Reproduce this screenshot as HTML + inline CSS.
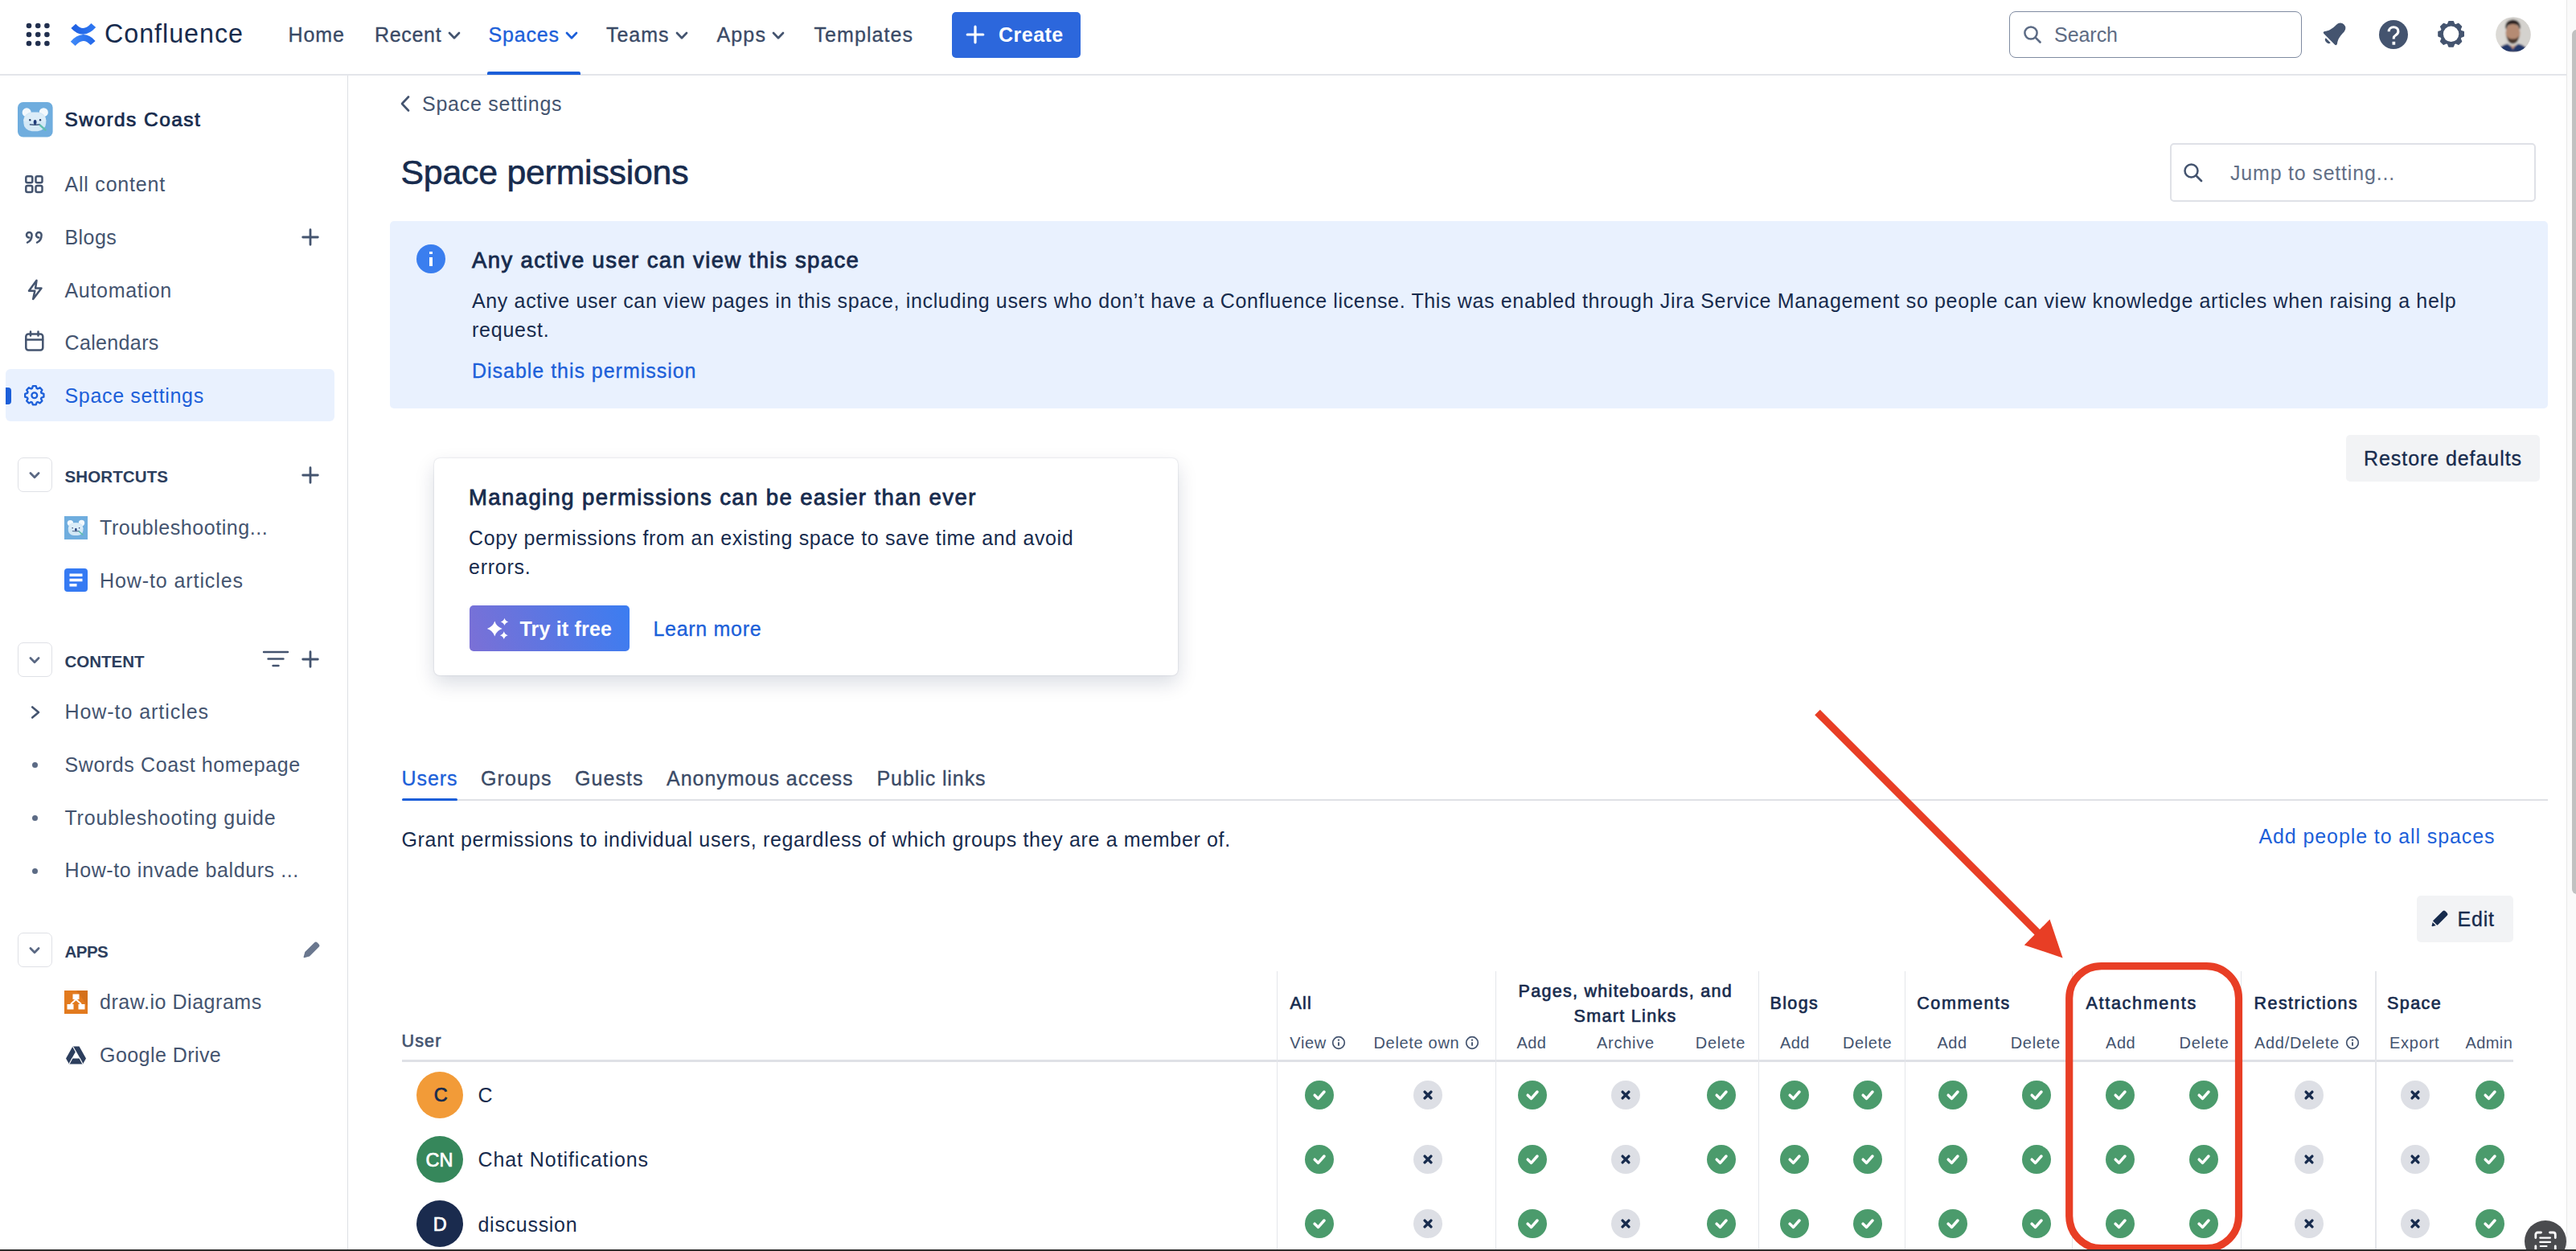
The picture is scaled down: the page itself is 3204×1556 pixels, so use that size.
<!DOCTYPE html>
<html lang="en"><head><meta charset="utf-8"><title>Space permissions - Swords Coast - Confluence</title>
<style>
html,body{margin:0;padding:0;background:#fff;}
html{overflow:hidden;width:3204px;height:1556px;}
body{width:3204px;height:1556px;overflow:hidden;position:relative;font-family:"Liberation Sans", sans-serif;}
.t{position:absolute;white-space:nowrap;line-height:1;}
.a{position:absolute;}
svg{position:absolute;overflow:visible;}

.hl{position:absolute;background:#dfe1e6;}
.chev{fill:none;stroke:#44546f;stroke-width:2.6;stroke-linecap:round;stroke-linejoin:round;}
.ico{fill:none;stroke:#44546f;stroke-width:2.5;stroke-linecap:round;stroke-linejoin:round;}
.box{position:absolute;border:1.5px solid #dfe1e6;border-radius:7px;box-sizing:border-box;background:#fff;}
.ck{position:absolute;width:36px;height:36px;border-radius:50%;background:#4b9b6c;}
.xx{position:absolute;width:36px;height:36px;border-radius:50%;background:#dddfe5;}
.av{position:absolute;width:58px;height:58px;border-radius:50%;}

</style></head><body>
<header role="banner">
<div class="hl" style="left:0;top:92px;width:3192px;height:2px;background:#e3e5ea"></div>
<svg width="100" height="93" style="left:0;top:0" fill="#22304f"><circle cx="36" cy="32" r="3.3"/><circle cx="47.2" cy="32" r="3.3"/><circle cx="58.4" cy="32" r="3.3"/><circle cx="36" cy="43" r="3.3"/><circle cx="47.2" cy="43" r="3.3"/><circle cx="58.4" cy="43" r="3.3"/><circle cx="36" cy="54" r="3.3"/><circle cx="47.2" cy="54" r="3.3"/><circle cx="58.4" cy="54" r="3.3"/></svg>
<svg style="left:0;top:0" width="140" height="93" viewBox="0 0 140 93" fill="none">
<defs><linearGradient id="cg1" gradientUnits="userSpaceOnUse" x1="90" y1="0" x2="118" y2="0"><stop offset="0" stop-color="#1f5fe2"/><stop offset="1" stop-color="#2f78f2"/></linearGradient>
<linearGradient id="cg2" gradientUnits="userSpaceOnUse" x1="90" y1="0" x2="118" y2="0"><stop offset="0" stop-color="#3f88f7"/><stop offset="1" stop-color="#2267ea"/></linearGradient></defs>
<path d="M91.300 32.300Q103.400 45.700 116.300 31.500" stroke="url(#cg1)" stroke-width="7.800"/>
<path d="M115.700 53.500Q103.600 40.100 90.700 54.300" stroke="url(#cg2)" stroke-width="7.800"/></svg>
<span class="t" id="t0" style="left:130.0px;top:26.2px;font-size:32.3px;color:#172b4d;letter-spacing:0.957px;">Confluence</span>
<span class="t" id="t1" style="left:358.5px;top:31.2px;font-size:25px;color:#3a4a66;-webkit-text-stroke-width:0.33px;letter-spacing:0.946px;">Home</span>
<span class="t" id="t2" style="left:466.0px;top:31.2px;font-size:25px;color:#3a4a66;-webkit-text-stroke-width:0.33px;letter-spacing:0.688px;">Recent</span>
<span class="t" id="t3" style="left:607.5px;top:31.2px;font-size:25px;color:#1c5fd9;-webkit-text-stroke-width:0.33px;letter-spacing:0.838px;">Spaces</span>
<span class="t" id="t4" style="left:754.0px;top:31.2px;font-size:25px;color:#3a4a66;-webkit-text-stroke-width:0.33px;letter-spacing:0.969px;">Teams</span>
<span class="t" id="t5" style="left:891.5px;top:31.2px;font-size:25px;color:#3a4a66;-webkit-text-stroke-width:0.33px;letter-spacing:1.147px;">Apps</span>
<span class="t" id="t6" style="left:1012.5px;top:31.2px;font-size:25px;color:#3a4a66;-webkit-text-stroke-width:0.33px;letter-spacing:1.064px;">Templates</span>
<svg style="left:555px;top:33.5px" width="20" height="20"><path d="M4.0 7.0L10 13.2L16.0 7.0" fill="none" stroke="#44546f" stroke-width="2.7" stroke-linecap="round" stroke-linejoin="round"/></svg>
<svg style="left:700.5px;top:33.5px" width="20" height="20"><path d="M4.0 7.0L10 13.2L16.0 7.0" fill="none" stroke="#1c5fd9" stroke-width="2.7" stroke-linecap="round" stroke-linejoin="round"/></svg>
<svg style="left:838.3px;top:33.5px" width="20" height="20"><path d="M4.0 7.0L10 13.2L16.0 7.0" fill="none" stroke="#44546f" stroke-width="2.7" stroke-linecap="round" stroke-linejoin="round"/></svg>
<svg style="left:958.3px;top:33.5px" width="20" height="20"><path d="M4.0 7.0L10 13.2L16.0 7.0" fill="none" stroke="#44546f" stroke-width="2.7" stroke-linecap="round" stroke-linejoin="round"/></svg>
<div class="a" style="left:606px;top:89.200px;width:115.500px;height:4.300px;background:#1c5fd9;border-radius:2px 2px 0 0"></div>
<div class="a" style="left:1183.5px;top:14.5px;width:160px;height:57px;background:#2c67dc;border-radius:5px"></div>
<svg style="left:1202px;top:32px" width="22" height="22"><path d="M11 1.200V20.800M1.200 11H20.800" stroke="#fff" stroke-width="3.2" stroke-linecap="round"/></svg>
<span class="t" id="t7" style="left:1242.0px;top:31.2px;font-size:25px;color:#fff;font-weight:700;letter-spacing:0.486px;">Create</span>
<div class="a" style="left:2498.500px;top:13.900px;width:364.500px;height:58px;border:1.800px solid #7f8ba1;border-radius:8px;box-sizing:border-box"></div>
<svg style="left:2516px;top:31px" width="24" height="24"><circle cx="10" cy="10" r="7.600" fill="none" stroke="#5c6b85" stroke-width="2.5"/><path d="M15.600 15.600L21.500 21.500" stroke="#5c6b85" stroke-width="2.7" stroke-linecap="round"/></svg>
<span class="t" id="t8" style="left:2555.0px;top:31.2px;font-size:25px;color:#5e6c84;letter-spacing:-0.040px;">Search</span>
<svg style="left:0;top:0" width="3204" height="93"><g transform="translate(2904.500 41.400) rotate(45)" fill="#44546f">
<path d="M-6.500 -9A6.500 6.500 0 0 1 6.500 -9C6.500 -1 8 4 11 7.500Q12.300 10.300 9.500 10.300L-9.500 10.300Q-12.300 10.300 -11 7.500C-8 4 -6.500 -1 -6.500 -9Z"/>
<path d="M-4.200 12.400h8.400a4.200 3.300 0 0 1-8.400 0z"/></g></svg>
<div class="a" style="left:2958.6px;top:25px;width:36px;height:36px;border-radius:50%;background:#44546f"></div>
<svg style="left:2958.600px;top:25px" width="36" height="36" viewBox="0 0 36 36"><path d="M12.200 14.300c0-3.300 2.400-5.500 5.900-5.500s5.800 2.100 5.800 5.100c0 2.400-1.400 3.700-3.100 4.800-1.600 1-2.500 1.800-2.500 3.500v1.300" fill="none" stroke="#fff" stroke-width="3.100" stroke-linecap="butt"/><rect x="16.500" y="26.800" width="3.700" height="3.900" fill="#fff"/></svg>
<svg style="left:3028px;top:22px" width="42" height="42"><path d="M32.64 16.58L36.00 17.81L36.00 22.79L32.64 24.02L31.74 26.18L33.25 29.43L29.73 32.95L26.48 31.44L24.32 32.34L23.09 35.70L18.11 35.70L16.88 32.34L14.72 31.44L11.47 32.95L7.95 29.43L9.46 26.18L8.56 24.02L5.20 22.79L5.20 17.81L8.56 16.58L9.46 14.42L7.95 11.17L11.47 7.65L14.72 9.16L16.88 8.26L18.11 4.90L23.09 4.90L24.32 8.26L26.48 9.16L29.73 7.65L33.25 11.17L31.74 14.42Z" fill="#44546f" stroke="#44546f" stroke-width="2" stroke-linejoin="round"/><circle cx="20.600" cy="20.300" r="9.700" fill="#fff"/></svg>
<svg style="left:3104px;top:21px" width="44" height="44" viewBox="0 0 44 44"><defs><filter id="avb"><feGaussianBlur stdDeviation="0.9"/></filter><clipPath id="avc"><circle cx="22" cy="22" r="21.800"/></clipPath></defs>
<g clip-path="url(#avc)"><g filter="url(#avb)"><rect x="-4" y="-4" width="52" height="52" fill="#d4d2ce"/><rect x="0" y="0" width="12" height="44" fill="#dcdad6"/>
<ellipse cx="21.500" cy="20" rx="9" ry="11.500" fill="#b58b73"/><path d="M12 14c0-7 4-10.500 9.500-10.500S31 7 31 14l-1.500 1c-.5-4-3-6-8-6s-7.500 2-8 6z" fill="#2b2320"/>
<path d="M13.500 23c1 7 4 10.500 8 10.500s7-3.500 8-10.500c-1.500 3-4 4.500-8 4.500s-6.500-1.500-8-4.500z" fill="#4a372f"/>
<path d="M3 44c1-7 7-9.500 12-10.500l6.500 5 6.500-5c5 1 11 3.500 12 10.500z" fill="#24386b"/><path d="M18 34.500l3.500 6 3.500-6-3.500 2z" fill="#c79a7f"/></g></g></svg>
</header>
<div class="a" style="left:3192px;top:0;width:12px;height:1556px;background:#fafafa;border-left:1.5px solid #e8e8e8;box-sizing:border-box"></div>
<div class="a" style="left:3198.500px;top:37px;width:12px;height:1075px;background:#c1c1c1;border-radius:6px"></div>
<aside aria-label="Space navigation">
<div class="hl" style="left:431.500px;top:94px;width:1.500px;height:1462px;background:#dddfe4"></div>
<svg style="left:21.800px;top:126.800px" width="43.600" height="43.600" viewBox="0 0 44 44"><rect width="44" height="44" rx="6.800" fill="#6fadde"/><circle cx="11.300" cy="13" r="5.600" fill="#f3f9fd"/><circle cx="32.600" cy="12.800" r="5.600" fill="#f3f9fd"/>
<rect x="7.400" y="12.500" width="28.200" height="24" rx="10.500" fill="#d3e8f6"/><path d="M7.400 24a14.100 11 0 0 1 28.200 0z" fill="#dcedf8"/>
<ellipse cx="21.800" cy="25.300" rx="1.900" ry="3" fill="#1f3a78"/>
<circle cx="15.400" cy="22.500" r="1.200" fill="#27406b"/><circle cx="28.300" cy="22.500" r="1.200" fill="#27406b"/><path d="M15 28.200Q21.800 29 28.200 28.200" stroke="#27406b" stroke-width="1.200" fill="none"/>
<path d="M28 29l6.800 6" stroke="#5fbfae" stroke-width="2.400" stroke-linecap="round"/></svg>
<span class="t" id="t9" style="left:80.5px;top:137.4px;font-size:24.5px;color:#172b4d;-webkit-text-stroke-width:0.73px;letter-spacing:1.433px;">Swords Coast</span>
<svg style="left:30px;top:217px" width="26" height="25" class="ico"><rect x="2.3" y="2.3" width="8" height="8" rx="2"/><rect x="2.3" y="14" width="8" height="8" rx="2"/><rect x="14.5" y="2.3" width="8" height="8" rx="2"/><rect x="14.5" y="14" width="8" height="8" rx="2"/></svg>
<span class="t" id="t10" style="left:80.5px;top:217.4px;font-size:25px;color:#44546f;letter-spacing:0.786px;">All content</span>
<svg style="left:31px;top:287px" width="26" height="19" class="ico" stroke-width="2.300"><path d="M5.3 8.600a3.300 3.300 0 1 1 0-6.600a3.300 3.300 0 0 1 3.300 3.300c0 4.500-1.800 7.700-5.600 9.300" /><path d="M17.3 8.600a3.300 3.300 0 1 1 0-6.600a3.300 3.300 0 0 1 3.300 3.300c0 4.500-1.800 7.700-5.600 9.300" /></svg>
<span class="t" id="t11" style="left:80.5px;top:283.1px;font-size:25px;color:#44546f;letter-spacing:0.434px;">Blogs</span>
<svg style="left:375.3px;top:284px" width="22" height="22"><path d="M11 1.700V20.300M1.700 11H20.300" stroke="#44546f" stroke-width="2.800" stroke-linecap="round"/></svg>
<svg style="left:34px;top:347px" width="20" height="27" class="ico" stroke-width="2.300"><path d="M11.500 1.800L2 14.800h7.300L7.200 25 17.500 11.500h-7.400z"/></svg>
<span class="t" id="t12" style="left:80.5px;top:348.7px;font-size:25px;color:#44546f;letter-spacing:0.688px;">Automation</span>
<svg style="left:30px;top:411px" width="26" height="27" class="ico"><rect x="2.300" y="4.500" width="21" height="20" rx="3"/><path d="M2.500 11.500h20.500M8 1.500v5M17.500 1.500v5"/></svg>
<span class="t" id="t13" style="left:80.5px;top:413.6px;font-size:25px;color:#44546f;letter-spacing:0.358px;">Calendars</span>
<div class="a" style="left:7px;top:459.300px;width:408.700px;height:65px;background:#e9f1fe;border-radius:6px"></div>
<div class="a" style="left:7px;top:481.500px;width:6.500px;height:21px;background:#1c5fd9;border-radius:0 4px 4px 0"></div>
<svg style="left:29px;top:478px" width="28" height="28"><path d="M22.55 10.95L25.43 11.83L25.43 15.77L22.55 16.65L22.00 17.97L23.42 20.63L20.63 23.42L17.97 22.00L16.65 22.55L15.77 25.43L11.83 25.43L10.95 22.55L9.63 22.00L6.97 23.42L4.18 20.63L5.60 17.97L5.05 16.65L2.17 15.77L2.17 11.83L5.05 10.95L5.60 9.63L4.18 6.97L6.97 4.18L9.63 5.60L10.95 5.05L11.83 2.17L15.77 2.17L16.65 5.05L17.97 5.60L20.63 4.18L23.42 6.97L22.00 9.63Z" fill="none" stroke="#1c5fd9" stroke-width="2.300" stroke-linejoin="round"/><circle cx="13.800" cy="13.800" r="3.400" fill="none" stroke="#1c5fd9" stroke-width="2.300"/></svg>
<span class="t" id="t14" style="left:80.5px;top:480.1px;font-size:25px;color:#1c5fd9;letter-spacing:0.667px;">Space settings</span>
<div class="box" style="left:21.500px;top:568.5px;width:43.500px;height:43px"></div>
<svg style="left:33.3px;top:580.5px" width="20" height="20"><path d="M4.9 7.45L10 12.72L15.1 7.45" fill="none" stroke="#5a6883" stroke-width="2.7" stroke-linecap="round" stroke-linejoin="round"/></svg>
<span class="t" id="t15" style="left:80.5px;top:582.5px;font-size:20.5px;color:#2c3e5d;font-weight:700;letter-spacing:0.110px;">SHORTCUTS</span>
<svg style="left:375.3px;top:579.7px" width="22" height="22"><path d="M11 1.700V20.300M1.700 11H20.300" stroke="#44546f" stroke-width="2.800" stroke-linecap="round"/></svg>
<div class="box" style="left:21.500px;top:798.5px;width:43.500px;height:43px"></div>
<svg style="left:33.3px;top:810.5px" width="20" height="20"><path d="M4.9 7.45L10 12.72L15.1 7.45" fill="none" stroke="#5a6883" stroke-width="2.7" stroke-linecap="round" stroke-linejoin="round"/></svg>
<span class="t" id="t16" style="left:80.5px;top:812.5px;font-size:20.5px;color:#2c3e5d;font-weight:700;letter-spacing:-0.012px;">CONTENT</span>
<svg style="left:375.3px;top:809.3px" width="22" height="22"><path d="M11 1.700V20.300M1.700 11H20.300" stroke="#44546f" stroke-width="2.800" stroke-linecap="round"/></svg>
<svg style="left:326px;top:808px" width="34" height="26" fill="none" stroke="#44546f" stroke-width="2.400" stroke-linecap="round"><path d="M2 3h30M7.500 11.500h19M13.500 20h7"/></svg>
<div class="box" style="left:21.500px;top:1159.5px;width:43.500px;height:43px"></div>
<svg style="left:33.3px;top:1171.5px" width="20" height="20"><path d="M4.9 7.45L10 12.72L15.1 7.45" fill="none" stroke="#5a6883" stroke-width="2.7" stroke-linecap="round" stroke-linejoin="round"/></svg>
<span class="t" id="t17" style="left:80.5px;top:1173.5px;font-size:20.5px;color:#2c3e5d;font-weight:700;letter-spacing:-0.522px;">APPS</span>
<svg style="left:376px;top:1170px" width="23" height="23" viewBox="0 0 23 23"><path d="M15.200 2.300a2.300 2.300 0 0 1 3.300 0l2.200 2.200a2.300 2.300 0 0 1 0 3.300L9 19.500l-6.500 1.700c-.6.200-1.100-.3-.9-.9L3.300 14z" fill="#6b788f"/></svg>
<svg style="left:80px;top:641.500px" width="29" height="29" viewBox="0 0 44 44"><rect width="44" height="44" fill="#6fadde"/><circle cx="11.300" cy="13" r="5.600" fill="#f3f9fd"/><circle cx="32.600" cy="12.800" r="5.600" fill="#f3f9fd"/>
<rect x="7.400" y="12.500" width="28.200" height="24" rx="10.500" fill="#d3e8f6"/><path d="M7.400 24a14.100 11 0 0 1 28.200 0z" fill="#dcedf8"/>
<ellipse cx="21.800" cy="25.300" rx="1.900" ry="3" fill="#1f3a78"/>
<circle cx="15.400" cy="22.500" r="1.200" fill="#27406b"/><circle cx="28.300" cy="22.500" r="1.200" fill="#27406b"/><path d="M15 28.200Q21.800 29 28.200 28.200" stroke="#27406b" stroke-width="1.200" fill="none"/>
<path d="M28 29l6.800 6" stroke="#5fbfae" stroke-width="2.400" stroke-linecap="round"/></svg>
<span class="t" id="t18" style="left:124.0px;top:644.1px;font-size:25px;color:#44546f;letter-spacing:0.560px;">Troubleshooting...</span>
<svg style="left:80px;top:707px" width="29" height="29"><rect width="29" height="29" rx="4" fill="#357af3"/><path d="M6.500 8.300h16M6.500 14.500h16M6.500 20.700h9" stroke="#fff" stroke-width="3.400"/></svg>
<span class="t" id="t19" style="left:124.0px;top:709.7px;font-size:25px;color:#44546f;letter-spacing:0.908px;">How-to articles</span>
<svg style="left:34px;top:876px" width="20" height="20"><path d="M6.200 3.500l7.800 6.500-7.800 6.500" class="chev" stroke-width="2.500"/></svg>
<span class="t" id="t20" style="left:80.5px;top:873.1px;font-size:25px;color:#44546f;letter-spacing:0.943px;">How-to articles</span>
<div class="a" style="left:40px;top:947.9000000000001px;width:7px;height:7px;border-radius:50%;background:#5c6b85"></div>
<span class="t" id="t21" style="left:80.5px;top:938.6px;font-size:25px;color:#44546f;letter-spacing:0.599px;">Swords Coast homepage</span>
<div class="a" style="left:40px;top:1014.1000000000001px;width:7px;height:7px;border-radius:50%;background:#5c6b85"></div>
<span class="t" id="t22" style="left:80.5px;top:1004.8px;font-size:25px;color:#44546f;letter-spacing:0.781px;">Troubleshooting guide</span>
<div class="a" style="left:40px;top:1079.7px;width:7px;height:7px;border-radius:50%;background:#5c6b85"></div>
<span class="t" id="t23" style="left:80.5px;top:1070.4px;font-size:25px;color:#44546f;letter-spacing:0.591px;">How-to invade baldurs ...</span>
<svg style="left:80px;top:1232px" width="29" height="29" viewBox="0 0 29 29"><rect width="29" height="29" fill="#e27a1e"/><path d="M15 0H29V19z" fill="#c8681a" opacity=".55"/>
<rect x="10.500" y="4.500" width="8" height="6.500" fill="#fff"/><rect x="3.500" y="17" width="8" height="6.500" fill="#fff"/><rect x="17.500" y="17" width="8" height="6.500" fill="#fff"/><path d="M14.500 11L8 17M14.500 11L21 17" stroke="#fff" stroke-width="2"/></svg>
<span class="t" id="t24" style="left:124.0px;top:1234.4px;font-size:25px;color:#44546f;letter-spacing:0.539px;">draw.io Diagrams</span>
<svg style="left:81px;top:1300px" width="27" height="25" viewBox="0 0 27 25"><path d="M9.500 1.500h8L26 16.500l-4 7H5l-4-7z" fill="#2c3e5d"/><path d="M13.500 7.300L8.300 16.600h10.400z" fill="#fff"/><path d="M5 23.500l4-7.500M22 23.500l-4-7.500M9.500 1.500L13.500 8.500" stroke="#fff" stroke-width="1.200"/></svg>
<span class="t" id="t25" style="left:124.0px;top:1300.1px;font-size:25px;color:#44546f;letter-spacing:0.443px;">Google Drive</span>
</aside>
<main>
<svg style="left:495px;top:118px" width="18" height="22"><path d="M13 2.500L5 11l8 8.500" class="chev" stroke-width="2.800"/></svg>
<span class="t" id="t26" style="left:525.0px;top:116.9px;font-size:25px;color:#44546f;letter-spacing:0.741px;">Space settings</span>
<span class="t" id="t27" style="left:498.5px;top:193.0px;font-size:42.8px;color:#172b4d;letter-spacing:-0.216px;-webkit-text-stroke:0.6px #172b4d;">Space permissions</span>
<div class="a" style="left:2699.200px;top:178.400px;width:455.200px;height:72.200px;border:2px solid #dfe1e7;border-radius:5px;box-sizing:border-box"></div>
<svg style="left:2715px;top:202px" width="26" height="26"><circle cx="10.500" cy="10.500" r="8" fill="none" stroke="#44546f" stroke-width="2.500"/><path d="M16.500 16.500L23 23" stroke="#44546f" stroke-width="2.700" stroke-linecap="round"/></svg>
<span class="t" id="t28" style="left:2774.0px;top:203.2px;font-size:25px;color:#626f86;letter-spacing:0.807px;">Jump to setting...</span>
<div class="a" style="left:484.500px;top:274.500px;width:2684.500px;height:233px;background:#e9f1fe;border-radius:5px"></div>
<div class="a" style="left:518px;top:304px;width:36px;height:36px;border-radius:50%;background:#3a7eef"></div>
<div class="a" style="left:534.300px;top:319.500px;width:3.600px;height:11.500px;background:#fff"></div><div class="a" style="left:534.300px;top:312.500px;width:3.600px;height:3.800px;background:#fff"></div>
<span class="t" id="t29" style="left:587.0px;top:309.8px;font-size:27.5px;color:#172b4d;-webkit-text-stroke-width:0.82px;letter-spacing:1.374px;">Any active user can view this space</span>
<span class="t" id="t30" style="left:587.0px;top:361.6px;font-size:25px;color:#172b4d;letter-spacing:0.647px;">Any active user can view pages in this space, including users who don’t have a Confluence license. This was enabled through Jira Service Management so people can view knowledge articles when raising a help</span>
<span class="t" id="t31" style="left:587.0px;top:397.6px;font-size:25px;color:#172b4d;letter-spacing:0.754px;">request.</span>
<span class="t" id="t32" style="left:587.0px;top:449.4px;font-size:25px;color:#1c5fd9;-webkit-text-stroke-width:0.33px;letter-spacing:0.976px;">Disable this permission</span>
<div class="a" style="left:2918px;top:541px;width:240.500px;height:58px;background:#f2f3f5;border-radius:5px"></div>
<span class="t" id="t33" style="left:2940.0px;top:558.4px;font-size:25px;color:#172b4d;-webkit-text-stroke-width:0.33px;letter-spacing:0.932px;">Restore defaults</span>
<div class="a" style="left:539.500px;top:569.500px;width:925.500px;height:270.500px;background:#fff;border-radius:7px;box-shadow:0 0 2px rgba(9,30,66,.2),0 10px 24px rgba(9,30,66,.15)"></div>
<span class="t" id="t34" style="left:583.0px;top:605.1px;font-size:27.5px;color:#172b4d;-webkit-text-stroke-width:0.82px;letter-spacing:1.398px;">Managing permissions can be easier than ever</span>
<span class="t" id="t35" style="left:583.0px;top:657.2px;font-size:25px;color:#172b4d;letter-spacing:0.637px;">Copy permissions from an existing space to save time and avoid</span>
<span class="t" id="t36" style="left:583.0px;top:693.2px;font-size:25px;color:#172b4d;letter-spacing:0.733px;">errors.</span>
<div class="a" style="left:583.800px;top:753px;width:199.700px;height:57.300px;border-radius:5px;background:linear-gradient(72deg,#7b70d6 0%,#5c76e2 50%,#3b7df1 100%)"></div>
<svg style="left:0;top:0" width="700" height="800" fill="#fff"><path d="M615.3 772.6Q617.5559999999999 779.744 624.6999999999999 782Q617.5559999999999 784.256 615.3 791.4Q613.044 784.256 605.9 782Q613.044 779.744 615.3 772.6ZM627.5 768.6999999999999Q628.534 772.366 632.2 773.4Q628.534 774.434 627.5 778.1Q626.466 774.434 622.8 773.4Q626.466 772.366 627.5 768.6999999999999ZM626.8 785.3000000000001Q627.8779999999999 789.1220000000001 631.6999999999999 790.2Q627.8779999999999 791.278 626.8 795.1Q625.722 791.278 621.9 790.2Q625.722 789.1220000000001 626.8 785.3000000000001Z"/></svg>
<span class="t" id="t37" style="left:646.5px;top:769.9px;font-size:25px;color:#fff;font-weight:700;letter-spacing:0.185px;">Try it free</span>
<span class="t" id="t38" style="left:812.5px;top:769.9px;font-size:25px;color:#1c5fd9;-webkit-text-stroke-width:0.33px;letter-spacing:0.699px;">Learn more</span>
<div class="hl" style="left:500px;top:993.500px;width:2669px;height:2.700px;background:#dfe1e6"></div>
<div class="a" style="left:500px;top:993.200px;width:69px;height:3.200px;background:#1c5fd9;border-radius:2px"></div>
<span class="t" id="t39" style="left:499.5px;top:956.4px;font-size:25px;color:#1c5fd9;-webkit-text-stroke-width:0.33px;letter-spacing:0.934px;">Users</span>
<span class="t" id="t40" style="left:598.0px;top:956.4px;font-size:25px;color:#3a4a66;-webkit-text-stroke-width:0.33px;letter-spacing:1.094px;">Groups</span>
<span class="t" id="t41" style="left:715.0px;top:956.4px;font-size:25px;color:#3a4a66;-webkit-text-stroke-width:0.33px;letter-spacing:1.054px;">Guests</span>
<span class="t" id="t42" style="left:829.0px;top:956.4px;font-size:25px;color:#3a4a66;-webkit-text-stroke-width:0.33px;letter-spacing:0.982px;">Anonymous access</span>
<span class="t" id="t43" style="left:1090.5px;top:956.4px;font-size:25px;color:#3a4a66;-webkit-text-stroke-width:0.33px;letter-spacing:0.908px;">Public links</span>
<span class="t" id="t44" style="left:499.5px;top:1032.2px;font-size:25px;color:#172b4d;letter-spacing:0.658px;">Grant permissions to individual users, regardless of which groups they are a member of.</span>
<span class="t" id="t45" style="left:2809.5px;top:1027.9px;font-size:25px;color:#1c5fd9;letter-spacing:0.897px;">Add people to all spaces</span>
<div class="a" style="left:3005.500px;top:1113.700px;width:120px;height:58px;background:#f2f3f5;border-radius:5px"></div>
<svg style="left:3023px;top:1131px" width="23" height="23" viewBox="0 0 23 23"><path d="M15.200 2.300a2.300 2.300 0 0 1 3.300 0l2.200 2.200a2.300 2.300 0 0 1 0 3.300L9 19.500l-6.500 1.700c-.6.200-1.100-.3-.9-.9L3.300 14z" fill="#172b4d"/><path d="M2.800 15.200L7.800 20.200" stroke="#f2f3f5" stroke-width="1.300"/></svg>
<span class="t" id="t46" style="left:3056.5px;top:1131.0px;font-size:25px;color:#172b4d;-webkit-text-stroke-width:0.33px;letter-spacing:0.830px;">Edit</span>
<section aria-label="User permissions">
<span class="t" id="t47" style="left:499.5px;top:1284.6px;font-size:21.5px;color:#44546f;-webkit-text-stroke-width:0.65px;letter-spacing:1.170px;">User</span>
<div class="hl" style="left:500px;top:1317.900px;width:2625.500px;height:3.300px;background:#dfe1e6"></div>
<div class="hl" style="left:1588.2px;top:1208px;width:1.300px;height:348px;background:#e4e6ea"></div>
<div class="hl" style="left:1859.9px;top:1208px;width:1.300px;height:348px;background:#e4e6ea"></div>
<div class="hl" style="left:2186.7px;top:1208px;width:1.300px;height:348px;background:#e4e6ea"></div>
<div class="hl" style="left:2369.0px;top:1208px;width:1.300px;height:348px;background:#e4e6ea"></div>
<div class="hl" style="left:2576.8999999999996px;top:1208px;width:1.300px;height:348px;background:#e4e6ea"></div>
<div class="hl" style="left:2786.7px;top:1208px;width:1.300px;height:348px;background:#e4e6ea"></div>
<div class="hl" style="left:2954.3999999999996px;top:1208px;width:1.300px;height:348px;background:#e4e6ea"></div>
<span class="t" id="t48" style="left:1604.5px;top:1237.8px;font-size:21.5px;color:#172b4d;-webkit-text-stroke-width:0.65px;letter-spacing:1.238px;">All</span>
<span class="t" id="t49" style="left:1888.5px;top:1222.7px;font-size:21.5px;color:#172b4d;-webkit-text-stroke-width:0.65px;letter-spacing:1.303px;">Pages, whiteboards, and</span>
<span class="t" id="t50" style="left:1957.5px;top:1253.7px;font-size:21.5px;color:#172b4d;-webkit-text-stroke-width:0.65px;letter-spacing:1.332px;">Smart Links</span>
<span class="t" id="t51" style="left:2201.5px;top:1237.8px;font-size:21.5px;color:#172b4d;-webkit-text-stroke-width:0.65px;letter-spacing:1.378px;">Blogs</span>
<span class="t" id="t52" style="left:2384.2px;top:1237.8px;font-size:21.5px;color:#172b4d;-webkit-text-stroke-width:0.65px;letter-spacing:1.606px;">Comments</span>
<span class="t" id="t53" style="left:2594.5px;top:1237.8px;font-size:21.5px;color:#172b4d;-webkit-text-stroke-width:0.65px;letter-spacing:1.714px;">Attachments</span>
<span class="t" id="t54" style="left:2803.5px;top:1237.8px;font-size:21.5px;color:#172b4d;-webkit-text-stroke-width:0.65px;letter-spacing:1.451px;">Restrictions</span>
<span class="t" id="t55" style="left:2969.0px;top:1237.8px;font-size:21.5px;color:#172b4d;-webkit-text-stroke-width:0.65px;letter-spacing:1.451px;">Space</span>
<span class="t" id="t56" style="left:1604.2px;top:1287.1px;font-size:20px;color:#44546f;letter-spacing:0.714px;">View</span>
<span class="t" id="t57" style="left:1708.5px;top:1287.1px;font-size:20px;color:#44546f;letter-spacing:0.678px;">Delete own</span>
<span class="t" id="t58" style="left:1886.5px;top:1287.1px;font-size:20px;color:#44546f;letter-spacing:0.362px;">Add</span>
<span class="t" id="t59" style="left:1986.0px;top:1287.1px;font-size:20px;color:#44546f;letter-spacing:0.738px;">Archive</span>
<span class="t" id="t60" style="left:2108.7px;top:1287.1px;font-size:20px;color:#44546f;letter-spacing:0.761px;">Delete</span>
<span class="t" id="t61" style="left:2214.0px;top:1287.1px;font-size:20px;color:#44546f;letter-spacing:0.362px;">Add</span>
<span class="t" id="t62" style="left:2292.0px;top:1287.1px;font-size:20px;color:#44546f;letter-spacing:0.580px;">Delete</span>
<span class="t" id="t63" style="left:2409.5px;top:1287.1px;font-size:20px;color:#44546f;letter-spacing:0.482px;">Add</span>
<span class="t" id="t64" style="left:2500.7px;top:1287.1px;font-size:20px;color:#44546f;letter-spacing:0.725px;">Delete</span>
<span class="t" id="t65" style="left:2619.0px;top:1287.1px;font-size:20px;color:#44546f;letter-spacing:0.562px;">Add</span>
<span class="t" id="t66" style="left:2710.5px;top:1287.1px;font-size:20px;color:#44546f;letter-spacing:0.707px;">Delete</span>
<span class="t" id="t67" style="left:2804.0px;top:1287.1px;font-size:20px;color:#44546f;letter-spacing:0.688px;">Add/Delete</span>
<span class="t" id="t68" style="left:2972.0px;top:1287.1px;font-size:20px;color:#44546f;letter-spacing:0.761px;">Export</span>
<span class="t" id="t69" style="left:3066.5px;top:1287.1px;font-size:20px;color:#44546f;letter-spacing:0.399px;">Admin</span>
<svg style="left:1656px;top:1288.3px" width="18" height="18"><circle cx="9" cy="9" r="7.300" fill="none" stroke="#44546f" stroke-width="1.700"/><path d="M9 8.300v4.400" stroke="#44546f" stroke-width="1.900"/><circle cx="9" cy="5.600" r="1.200" fill="#44546f"/></svg>
<svg style="left:1822.2px;top:1288.3px" width="18" height="18"><circle cx="9" cy="9" r="7.300" fill="none" stroke="#44546f" stroke-width="1.700"/><path d="M9 8.300v4.400" stroke="#44546f" stroke-width="1.900"/><circle cx="9" cy="5.600" r="1.200" fill="#44546f"/></svg>
<svg style="left:2916.5px;top:1288.3px" width="18" height="18"><circle cx="9" cy="9" r="7.300" fill="none" stroke="#44546f" stroke-width="1.700"/><path d="M9 8.300v4.400" stroke="#44546f" stroke-width="1.900"/><circle cx="9" cy="5.600" r="1.200" fill="#44546f"/></svg>
<div class="ck" style="left:1623.2px;top:1343.5px"><svg width="36" height="36" style="left:0;top:0"><path d="M12.200 18.200L16.600 22.400L24 14" fill="none" stroke="#fff" stroke-width="3.500" stroke-linecap="round" stroke-linejoin="round"/></svg></div>
<div class="xx" style="left:1758.2px;top:1343.5px"><svg width="36" height="36" style="left:0;top:0"><path d="M14.100 14.100l7.800 7.800M21.900 14.100l-7.800 7.800" fill="none" stroke="#172b4d" stroke-width="3.400" stroke-linecap="round"/></svg></div>
<div class="ck" style="left:1887.6px;top:1343.5px"><svg width="36" height="36" style="left:0;top:0"><path d="M12.200 18.200L16.600 22.400L24 14" fill="none" stroke="#fff" stroke-width="3.500" stroke-linecap="round" stroke-linejoin="round"/></svg></div>
<div class="xx" style="left:2004.4px;top:1343.5px"><svg width="36" height="36" style="left:0;top:0"><path d="M14.100 14.100l7.800 7.800M21.900 14.100l-7.800 7.800" fill="none" stroke="#172b4d" stroke-width="3.400" stroke-linecap="round"/></svg></div>
<div class="ck" style="left:2123.1px;top:1343.5px"><svg width="36" height="36" style="left:0;top:0"><path d="M12.200 18.200L16.600 22.400L24 14" fill="none" stroke="#fff" stroke-width="3.500" stroke-linecap="round" stroke-linejoin="round"/></svg></div>
<div class="ck" style="left:2214px;top:1343.5px"><svg width="36" height="36" style="left:0;top:0"><path d="M12.200 18.200L16.600 22.400L24 14" fill="none" stroke="#fff" stroke-width="3.500" stroke-linecap="round" stroke-linejoin="round"/></svg></div>
<div class="ck" style="left:2305.4px;top:1343.5px"><svg width="36" height="36" style="left:0;top:0"><path d="M12.200 18.200L16.600 22.400L24 14" fill="none" stroke="#fff" stroke-width="3.500" stroke-linecap="round" stroke-linejoin="round"/></svg></div>
<div class="ck" style="left:2411.1px;top:1343.5px"><svg width="36" height="36" style="left:0;top:0"><path d="M12.200 18.200L16.600 22.400L24 14" fill="none" stroke="#fff" stroke-width="3.500" stroke-linecap="round" stroke-linejoin="round"/></svg></div>
<div class="ck" style="left:2515px;top:1343.5px"><svg width="36" height="36" style="left:0;top:0"><path d="M12.200 18.200L16.600 22.400L24 14" fill="none" stroke="#fff" stroke-width="3.500" stroke-linecap="round" stroke-linejoin="round"/></svg></div>
<div class="ck" style="left:2619.2px;top:1343.5px"><svg width="36" height="36" style="left:0;top:0"><path d="M12.200 18.200L16.600 22.400L24 14" fill="none" stroke="#fff" stroke-width="3.500" stroke-linecap="round" stroke-linejoin="round"/></svg></div>
<div class="ck" style="left:2723px;top:1343.5px"><svg width="36" height="36" style="left:0;top:0"><path d="M12.200 18.200L16.600 22.400L24 14" fill="none" stroke="#fff" stroke-width="3.500" stroke-linecap="round" stroke-linejoin="round"/></svg></div>
<div class="xx" style="left:2854.1px;top:1343.5px"><svg width="36" height="36" style="left:0;top:0"><path d="M14.100 14.100l7.800 7.800M21.900 14.100l-7.800 7.800" fill="none" stroke="#172b4d" stroke-width="3.400" stroke-linecap="round"/></svg></div>
<div class="xx" style="left:2985.5px;top:1343.5px"><svg width="36" height="36" style="left:0;top:0"><path d="M14.100 14.100l7.800 7.800M21.900 14.100l-7.800 7.800" fill="none" stroke="#172b4d" stroke-width="3.400" stroke-linecap="round"/></svg></div>
<div class="ck" style="left:3078.9px;top:1343.5px"><svg width="36" height="36" style="left:0;top:0"><path d="M12.200 18.200L16.600 22.400L24 14" fill="none" stroke="#fff" stroke-width="3.500" stroke-linecap="round" stroke-linejoin="round"/></svg></div>
<div class="ck" style="left:1623.2px;top:1423.8px"><svg width="36" height="36" style="left:0;top:0"><path d="M12.200 18.200L16.600 22.400L24 14" fill="none" stroke="#fff" stroke-width="3.500" stroke-linecap="round" stroke-linejoin="round"/></svg></div>
<div class="xx" style="left:1758.2px;top:1423.8px"><svg width="36" height="36" style="left:0;top:0"><path d="M14.100 14.100l7.800 7.800M21.900 14.100l-7.800 7.800" fill="none" stroke="#172b4d" stroke-width="3.400" stroke-linecap="round"/></svg></div>
<div class="ck" style="left:1887.6px;top:1423.8px"><svg width="36" height="36" style="left:0;top:0"><path d="M12.200 18.200L16.600 22.400L24 14" fill="none" stroke="#fff" stroke-width="3.500" stroke-linecap="round" stroke-linejoin="round"/></svg></div>
<div class="xx" style="left:2004.4px;top:1423.8px"><svg width="36" height="36" style="left:0;top:0"><path d="M14.100 14.100l7.800 7.800M21.900 14.100l-7.800 7.800" fill="none" stroke="#172b4d" stroke-width="3.400" stroke-linecap="round"/></svg></div>
<div class="ck" style="left:2123.1px;top:1423.8px"><svg width="36" height="36" style="left:0;top:0"><path d="M12.200 18.200L16.600 22.400L24 14" fill="none" stroke="#fff" stroke-width="3.500" stroke-linecap="round" stroke-linejoin="round"/></svg></div>
<div class="ck" style="left:2214px;top:1423.8px"><svg width="36" height="36" style="left:0;top:0"><path d="M12.200 18.200L16.600 22.400L24 14" fill="none" stroke="#fff" stroke-width="3.500" stroke-linecap="round" stroke-linejoin="round"/></svg></div>
<div class="ck" style="left:2305.4px;top:1423.8px"><svg width="36" height="36" style="left:0;top:0"><path d="M12.200 18.200L16.600 22.400L24 14" fill="none" stroke="#fff" stroke-width="3.500" stroke-linecap="round" stroke-linejoin="round"/></svg></div>
<div class="ck" style="left:2411.1px;top:1423.8px"><svg width="36" height="36" style="left:0;top:0"><path d="M12.200 18.200L16.600 22.400L24 14" fill="none" stroke="#fff" stroke-width="3.500" stroke-linecap="round" stroke-linejoin="round"/></svg></div>
<div class="ck" style="left:2515px;top:1423.8px"><svg width="36" height="36" style="left:0;top:0"><path d="M12.200 18.200L16.600 22.400L24 14" fill="none" stroke="#fff" stroke-width="3.500" stroke-linecap="round" stroke-linejoin="round"/></svg></div>
<div class="ck" style="left:2619.2px;top:1423.8px"><svg width="36" height="36" style="left:0;top:0"><path d="M12.200 18.200L16.600 22.400L24 14" fill="none" stroke="#fff" stroke-width="3.500" stroke-linecap="round" stroke-linejoin="round"/></svg></div>
<div class="ck" style="left:2723px;top:1423.8px"><svg width="36" height="36" style="left:0;top:0"><path d="M12.200 18.200L16.600 22.400L24 14" fill="none" stroke="#fff" stroke-width="3.500" stroke-linecap="round" stroke-linejoin="round"/></svg></div>
<div class="xx" style="left:2854.1px;top:1423.8px"><svg width="36" height="36" style="left:0;top:0"><path d="M14.100 14.100l7.800 7.800M21.900 14.100l-7.800 7.800" fill="none" stroke="#172b4d" stroke-width="3.400" stroke-linecap="round"/></svg></div>
<div class="xx" style="left:2985.5px;top:1423.8px"><svg width="36" height="36" style="left:0;top:0"><path d="M14.100 14.100l7.800 7.800M21.900 14.100l-7.800 7.800" fill="none" stroke="#172b4d" stroke-width="3.400" stroke-linecap="round"/></svg></div>
<div class="ck" style="left:3078.9px;top:1423.8px"><svg width="36" height="36" style="left:0;top:0"><path d="M12.200 18.200L16.600 22.400L24 14" fill="none" stroke="#fff" stroke-width="3.500" stroke-linecap="round" stroke-linejoin="round"/></svg></div>
<div class="ck" style="left:1623.2px;top:1504px"><svg width="36" height="36" style="left:0;top:0"><path d="M12.200 18.200L16.600 22.400L24 14" fill="none" stroke="#fff" stroke-width="3.500" stroke-linecap="round" stroke-linejoin="round"/></svg></div>
<div class="xx" style="left:1758.2px;top:1504px"><svg width="36" height="36" style="left:0;top:0"><path d="M14.100 14.100l7.800 7.800M21.900 14.100l-7.800 7.800" fill="none" stroke="#172b4d" stroke-width="3.400" stroke-linecap="round"/></svg></div>
<div class="ck" style="left:1887.6px;top:1504px"><svg width="36" height="36" style="left:0;top:0"><path d="M12.200 18.200L16.600 22.400L24 14" fill="none" stroke="#fff" stroke-width="3.500" stroke-linecap="round" stroke-linejoin="round"/></svg></div>
<div class="xx" style="left:2004.4px;top:1504px"><svg width="36" height="36" style="left:0;top:0"><path d="M14.100 14.100l7.800 7.800M21.900 14.100l-7.800 7.800" fill="none" stroke="#172b4d" stroke-width="3.400" stroke-linecap="round"/></svg></div>
<div class="ck" style="left:2123.1px;top:1504px"><svg width="36" height="36" style="left:0;top:0"><path d="M12.200 18.200L16.600 22.400L24 14" fill="none" stroke="#fff" stroke-width="3.500" stroke-linecap="round" stroke-linejoin="round"/></svg></div>
<div class="ck" style="left:2214px;top:1504px"><svg width="36" height="36" style="left:0;top:0"><path d="M12.200 18.200L16.600 22.400L24 14" fill="none" stroke="#fff" stroke-width="3.500" stroke-linecap="round" stroke-linejoin="round"/></svg></div>
<div class="ck" style="left:2305.4px;top:1504px"><svg width="36" height="36" style="left:0;top:0"><path d="M12.200 18.200L16.600 22.400L24 14" fill="none" stroke="#fff" stroke-width="3.500" stroke-linecap="round" stroke-linejoin="round"/></svg></div>
<div class="ck" style="left:2411.1px;top:1504px"><svg width="36" height="36" style="left:0;top:0"><path d="M12.200 18.200L16.600 22.400L24 14" fill="none" stroke="#fff" stroke-width="3.500" stroke-linecap="round" stroke-linejoin="round"/></svg></div>
<div class="ck" style="left:2515px;top:1504px"><svg width="36" height="36" style="left:0;top:0"><path d="M12.200 18.200L16.600 22.400L24 14" fill="none" stroke="#fff" stroke-width="3.500" stroke-linecap="round" stroke-linejoin="round"/></svg></div>
<div class="ck" style="left:2619.2px;top:1504px"><svg width="36" height="36" style="left:0;top:0"><path d="M12.200 18.200L16.600 22.400L24 14" fill="none" stroke="#fff" stroke-width="3.500" stroke-linecap="round" stroke-linejoin="round"/></svg></div>
<div class="ck" style="left:2723px;top:1504px"><svg width="36" height="36" style="left:0;top:0"><path d="M12.200 18.200L16.600 22.400L24 14" fill="none" stroke="#fff" stroke-width="3.500" stroke-linecap="round" stroke-linejoin="round"/></svg></div>
<div class="xx" style="left:2854.1px;top:1504px"><svg width="36" height="36" style="left:0;top:0"><path d="M14.100 14.100l7.800 7.800M21.900 14.100l-7.800 7.800" fill="none" stroke="#172b4d" stroke-width="3.400" stroke-linecap="round"/></svg></div>
<div class="xx" style="left:2985.5px;top:1504px"><svg width="36" height="36" style="left:0;top:0"><path d="M14.100 14.100l7.800 7.800M21.900 14.100l-7.800 7.800" fill="none" stroke="#172b4d" stroke-width="3.400" stroke-linecap="round"/></svg></div>
<div class="ck" style="left:3078.9px;top:1504px"><svg width="36" height="36" style="left:0;top:0"><path d="M12.200 18.200L16.600 22.400L24 14" fill="none" stroke="#fff" stroke-width="3.500" stroke-linecap="round" stroke-linejoin="round"/></svg></div>
<div class="av" style="left:517.8px;top:1332.5px;background:#f29b38"></div>
<span class="t" id="t70" style="left:539.8px;top:1351.2px;font-size:23.5px;color:#172b4d;-webkit-text-stroke-width:0.70px;">C</span>
<span class="t" id="t71" style="left:594.5px;top:1350.1px;font-size:25px;color:#172b4d;">C</span>
<div class="av" style="left:517.8px;top:1412.8px;background:#36875b"></div>
<span class="t" id="t72" style="left:529.5px;top:1431.5px;font-size:23.5px;color:#fff;-webkit-text-stroke-width:0.70px;letter-spacing:0.031px;">CN</span>
<span class="t" id="t73" style="left:594.5px;top:1430.4px;font-size:25px;color:#172b4d;letter-spacing:0.918px;">Chat Notifications</span>
<div class="av" style="left:517.8px;top:1493px;background:#1a2b4e"></div>
<span class="t" id="t74" style="left:538.8px;top:1511.7px;font-size:23.5px;color:#fff;-webkit-text-stroke-width:0.70px;">D</span>
<span class="t" id="t75" style="left:594.5px;top:1510.6px;font-size:25px;color:#172b4d;letter-spacing:0.712px;">discussion</span>
</section>
</main>
<svg style="left:0;top:0" width="3204" height="1556" viewBox="0 0 3204 1556"><path d="M2260.500 886L2536 1161.500" stroke="#e83e25" stroke-width="9.300" fill="none"/><path d="M2565.600 1191.400L2517.800 1175.400L2549.500 1143.600Z" fill="#e83e25"/>
<rect x="2573.700" y="1201.600" width="210.800" height="351" rx="40" fill="none" stroke="#e83e25" stroke-width="9.200"/></svg>
<div class="a" style="left:3140.200px;top:1518.200px;width:52px;height:52px;border-radius:50%;background:#4a4b4e"></div>
<svg style="left:3150px;top:1528px" width="32" height="30" fill="none" stroke="#fff" stroke-linecap="round" stroke-linejoin="round"><path d="M3.800 11.500V7.500a2.500 2.500 0 0 1 2.500-2.500H10.500M21.500 5H25.800a2.500 2.500 0 0 1 2.500 2.500V11.500M3.800 22v6M28.300 22v6" stroke-width="2.800"/><path d="M9.300 11.600H22M9.300 16.900H22M9.800 22H17.500" stroke-width="2.200"/></svg>
<div class="a" style="left:0;top:1554px;width:3204px;height:2px;background:#2b2b2b"></div>
</body></html>
